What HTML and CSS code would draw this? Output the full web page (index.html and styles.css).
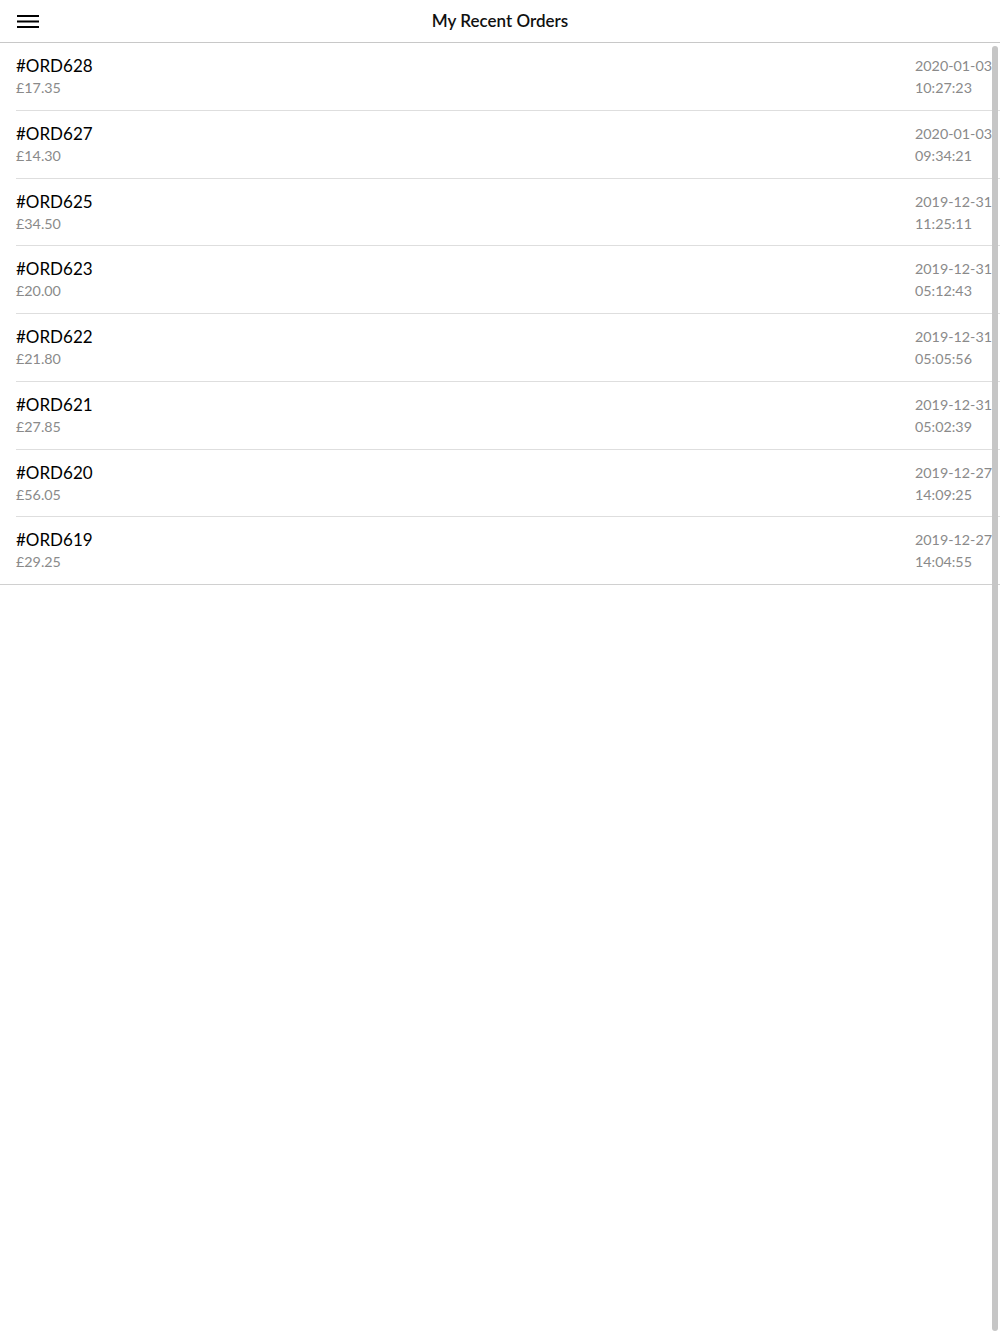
FILE: index.html
```html
<!DOCTYPE html>
<html>
<head>
  <meta name="viewport" content="width=device-width, initial-scale=1.0">
  <link rel="stylesheet" href="styles.css">
</head>
<body>
  <div class="header">
    <button class="menu-btn" aria-label="Menu">
      <svg width="22" height="13" viewBox="0 0 22 13">
        <rect x="0" y="0" width="22" height="2" fill="#000"/>
        <rect x="0" y="5.5" width="22" height="2" fill="#000"/>
        <rect x="0" y="11" width="22" height="2" fill="#000"/>
      </svg>
    </button>
    <h1>My Recent Orders</h1>
  </div>

  <div class="content">
    <ul class="order-list">
      <li class="order">
        <div class="order-info">
          <div class="order-id">#ORD628</div>
          <div class="order-price">£17.35</div>
        </div>
        <div class="order-date">2020-01-03<br>10:27:23</div>
      </li>
      <li class="order">
        <div class="order-info">
          <div class="order-id">#ORD627</div>
          <div class="order-price">£14.30</div>
        </div>
        <div class="order-date">2020-01-03<br>09:34:21</div>
      </li>
      <li class="order">
        <div class="order-info">
          <div class="order-id">#ORD625</div>
          <div class="order-price">£34.50</div>
        </div>
        <div class="order-date">2019-12-31<br>11:25:11</div>
      </li>
      <li class="order">
        <div class="order-info">
          <div class="order-id">#ORD623</div>
          <div class="order-price">£20.00</div>
        </div>
        <div class="order-date">2019-12-31<br>05:12:43</div>
      </li>
      <li class="order">
        <div class="order-info">
          <div class="order-id">#ORD622</div>
          <div class="order-price">£21.80</div>
        </div>
        <div class="order-date">2019-12-31<br>05:05:56</div>
      </li>
      <li class="order">
        <div class="order-info">
          <div class="order-id">#ORD621</div>
          <div class="order-price">£27.85</div>
        </div>
        <div class="order-date">2019-12-31<br>05:02:39</div>
      </li>
      <li class="order">
        <div class="order-info">
          <div class="order-id">#ORD620</div>
          <div class="order-price">£56.05</div>
        </div>
        <div class="order-date">2019-12-27<br>14:09:25</div>
      </li>
      <li class="order">
        <div class="order-info">
          <div class="order-id">#ORD619</div>
          <div class="order-price">£29.25</div>
        </div>
        <div class="order-date">2019-12-27<br>14:04:55</div>
      </li>
    </ul>
    <!-- overlay scroll indicator -->
    <div class="scroll-thumb"></div>
  </div>
</body>
</html>
```

FILE: styles.css
```css
* {
  box-sizing: border-box;
  margin: 0;
  padding: 0;
}

html, body {
  height: 100%;
}

body {
  font-family: Lato, "Open Sans", sans-serif;
  background-color: #fff;
  color: #000;
  display: flex;
  flex-direction: column;
}

.header {
  position: relative;
  height: 43px;
  padding-bottom: 2px;
  display: flex;
  align-items: center;
  justify-content: center;
  border-bottom: 1px solid #c8c8c8;
}

.menu-btn {
  position: absolute;
  left: 17px;
  top: 15px;
  border: none;
  background: none;
  display: flex;
}

.header h1 {
  font-size: 17px;
  font-weight: 600;
  color: #111;
}

.content {
  position: relative;
  flex: 1;
}

.order-list {
  list-style: none;
}

.order {
  display: flex;
  justify-content: space-between;
  align-items: flex-start;
  height: 67.75px;
  margin-left: 16px;
  padding: 12px 8px 0 0;
  border-bottom: 1px solid #dedede;
}

.order:last-child {
  margin-left: 0;
  padding-left: 16px;
  border-bottom-color: #d0d0d0;
}

.order-id {
  font-size: 17px;
  line-height: 22px;
  color: #000;
}

.order-price,
.order-date {
  font-size: 14.3px;
  line-height: 22px;
  color: #8a8a8a;
}

.order-date {
  text-align: left;
}

.scroll-thumb {
  position: absolute;
  top: 3px;
  right: 2px;
  bottom: 3px;
  width: 6px;
  border-radius: 3px;
  background-color: #c6c6c6;
}
```
